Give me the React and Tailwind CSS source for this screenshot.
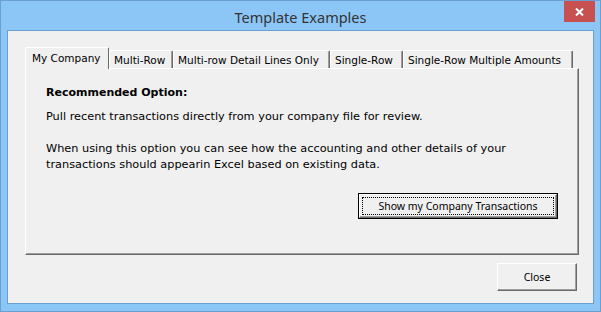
import React from 'react';

const tabs = [
  { label: 'My Company', w: 'w-[84px]' },
  { label: 'Multi-Row', w: 'w-[64px]' },
  { label: 'Multi-row Detail Lines Only', w: 'w-[157px]' },
  { label: 'Single-Row', w: 'w-[73px]' },
  { label: 'Single-Row Multiple Amounts', w: 'w-[170px]' },
];

function Tab({ label, w, active }) {
  if (active) {
    return (
      <div className={`relative z-10 -mb-px h-[22px] ${w} rounded-t-[2px] border border-b-0 border-l-white border-t-white border-r-[#696969] bg-[#f0f0f0] pl-[6px] pt-[2px] text-[#000]`}>
        {label}
      </div>
    );
  }
  return (
    <div className={`h-[18px] ${w} rounded-t-[2px] border border-b-0 border-l-white border-t-white border-r-[#696969] bg-[#f0f0f0] pl-[4px] pt-[1px] text-black shadow-[inset_-1px_0_0_#a0a0a0]`}>
      {label}
    </div>
  );
}

const btnFont = { fontFamily: '"Noto Sans", "Open Sans", sans-serif' };

export default function App() {
  return (
    <div className="h-[312px] w-[601px] border border-[#6a9fd0] bg-[#8cc6f7]" style={{ fontFamily: '"DejaVu Sans", sans-serif' }}>
      {/* title bar */}
      <div className="flex h-[29px] items-start">
        <div className="flex-1 pl-[36px] pt-[6px] text-center text-[14.5px] leading-[20px] text-[#333]" style={btnFont}>
          Template Examples
        </div>
        <div className="mr-[5px] flex h-[21px] w-[31px] items-center justify-center bg-[#c75050]">
          <svg width="9" height="8" viewBox="0 0 9 8">
            <path d="M1 0.5 L8 7.5 M8 0.5 L1 7.5" stroke="#fff" strokeWidth="2" />
          </svg>
        </div>
      </div>

      {/* client area */}
      <div className="mx-[6px] h-[274px] border border-[#6a9fd0] bg-[#f0f0f0] pl-[17px] pt-[16px] text-[10.5px] leading-[16px]">
        <div className="flex h-[21px] items-end">
          {tabs.map((t, i) => (
            <Tab key={t.label} {...t} active={i === 0} />
          ))}
        </div>
        <div className="h-[187px] w-[554px] border border-l-white border-t-white border-r-[#696969] border-b-[#696969] pl-[20px] pt-[16px] text-black shadow-[inset_-1px_-1px_0_#a0a0a0]">
          <div className="text-[11px] font-bold">Recommended Option:</div>
          <div className="text-[11.3px]">
            <div className="mt-[8px]">Pull recent transactions directly from your company file for review.</div>
            <div className="mt-[16px]">When using this option you can see how the accounting and other details of your</div>
            <div>transactions should appearin Excel based on existing data.</div>
          </div>
          <div className="ml-[312px] mt-[20px] h-[26px] w-[200px] border border-black">
            <div className="h-full w-full border border-l-white border-t-white border-r-[#696969] border-b-[#696969] bg-[#f0f0f0] p-[2px] shadow-[inset_-1px_-1px_0_#a0a0a0]">
              <div className="flex h-full w-full items-center justify-center border border-dotted border-black text-[10.5px]" style={btnFont}>
                Show my Company Transactions
              </div>
            </div>
          </div>
        </div>
        <div className="mr-[16px] mt-[8px] flex justify-end">
          <div className="flex h-[28px] w-[80px] items-center justify-center border border-l-white border-t-white border-r-[#696969] border-b-[#696969] bg-[#f0f0f0] text-[10.5px] text-black shadow-[inset_-1px_-1px_0_#a0a0a0]" style={btnFont}>
            Close
          </div>
        </div>
      </div>
    </div>
  );
}
